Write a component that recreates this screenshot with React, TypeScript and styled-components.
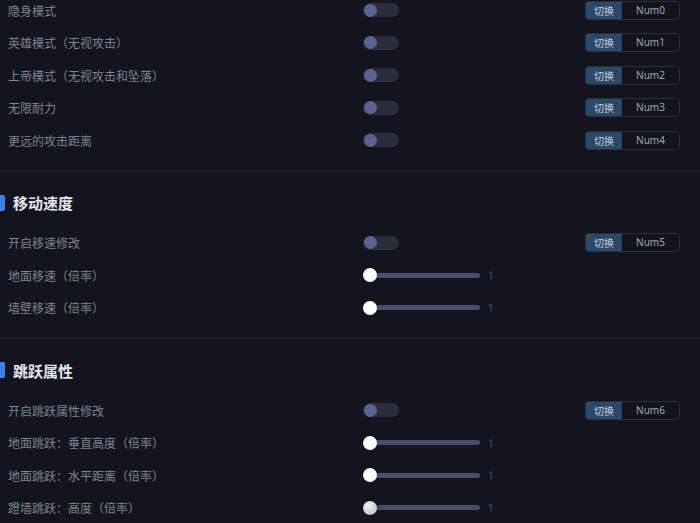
import React from 'react'
import styled, { createGlobalStyle } from 'styled-components'

const GlobalStyle = createGlobalStyle`
  html, body {
    margin: 0;
    padding: 0;
    background: #12151d;
    overflow: hidden;
  }
  body {
    font-family: "Noto Sans CJK SC", "Noto Sans", sans-serif;
  }
`

const StyledPage = styled.div`
  width: 700px;
  height: 523px;
  overflow: hidden;
  background: #12151d;
`
const StyledList = styled.div`
  margin-top: -6px;
`
const StyledRow = styled.div`
  display: grid;
  grid-template-columns: 355px 1fr auto;
  align-items: center;
  height: 32.5px;
  padding: 0 20px 0 8px;
`
const StyledLabel = styled.span`
  font-size: 12px;
  color: #7f848e;
  white-space: nowrap;
`
const StyledDivider = styled.div<{ below: number }>`
  height: 1px;
  background: #1f232d;
  margin: 14px 0 ${props => props.below}px;
`
const StyledHeader = styled.h2`
  display: flex;
  align-items: center;
  gap: 8px;
  height: 24px;
  margin: 0 0 12px;
  font-size: 15px;
  font-weight: 700;
  color: #e4e7ee;
  &::before {
    content: '';
    width: 5px;
    height: 16px;
    border-radius: 0 2px 2px 0;
    background: #3b7ff2;
  }
`
const StyledToggle = styled.div`
  display: flex;
  align-items: center;
  width: 36px;
  height: 14px;
  padding: 0 1px;
  box-sizing: border-box;
  border-radius: 7px;
  background: #2a2e3a;
  .knob {
    width: 13px;
    height: 13px;
    border-radius: 50%;
    background: #58638f;
  }
`
const StyledKey = styled.div`
  display: flex;
  width: 95px;
  height: 19px;
  box-sizing: border-box;
  border: 1px solid #2a2f3b;
  border-radius: 3px;
  overflow: hidden;
  font-size: 10px;
  line-height: 17px;
  .mode {
    width: 36px;
    text-align: center;
    background: #2c4868;
    color: #c5d2e0;
  }
  .key {
    flex: 1;
    text-align: center;
    font-family: "Noto Sans", sans-serif;
    color: #a2a9b5;
    background: #11141b;
  }
`
const StyledSlider = styled.div`
  display: flex;
  align-items: center;
  gap: 8px;
  .value {
    font-family: "Noto Sans", sans-serif;
    font-size: 10px;
    color: #3b5788;
  }
`
const StyledTrack = styled.div`
  position: relative;
  width: 110px;
  height: 5px;
  margin-left: 7px;
  border-radius: 3px;
  background: #4a4c69;
`
const StyledThumb = styled.div<{ dim: boolean }>`
  position: absolute;
  top: 50%;
  width: 14px;
  height: 14px;
  margin: -7px 0 0 -7px;
  border-radius: 50%;
  background: ${props => (props.dim ? 'radial-gradient(circle at 40% 35%, #f2f2f2, #b8b8b8)' : '#ffffff')};
  box-shadow: 0 0 2px rgba(0, 0, 0, 0.4);
`

type RowProps =
  | { kind: 'toggle'; label: string; hotkey: string }
  | { kind: 'slider'; label: string; value: number; dim?: boolean }

const Toggle: React.FC = () => (
  <StyledToggle>
    <div className="knob" />
  </StyledToggle>
)

const KeyBind: React.FC<{ hotkey: string }> = ({ hotkey }) => (
  <StyledKey>
    <span className="mode">切换</span>
    <span className="key">{hotkey}</span>
  </StyledKey>
)

const Slider: React.FC<{ value: number; min?: number; max?: number; dim?: boolean }> = ({
  value,
  min = 1,
  max = 10,
  dim = false,
}) => {
  const pct = ((value - min) / (max - min)) * 100
  return (
    <StyledSlider>
      <StyledTrack>
        <StyledThumb dim={dim} style={{ left: `${pct}%` }} />
      </StyledTrack>
      <span className="value">{value}</span>
    </StyledSlider>
  )
}

const SettingRow: React.FC<{ row: RowProps }> = ({ row }) => (
  <StyledRow>
    <StyledLabel>{row.label}</StyledLabel>
    {row.kind === 'toggle' ? <Toggle /> : <Slider value={row.value} dim={row.dim} />}
    {row.kind === 'toggle' ? <KeyBind hotkey={row.hotkey} /> : <span />}
  </StyledRow>
)

const modeRows: RowProps[] = [
  { kind: 'toggle', label: '隐身模式', hotkey: 'Num0' },
  { kind: 'toggle', label: '英雄模式（无视攻击）', hotkey: 'Num1' },
  { kind: 'toggle', label: '上帝模式（无视攻击和坠落）', hotkey: 'Num2' },
  { kind: 'toggle', label: '无限耐力', hotkey: 'Num3' },
  { kind: 'toggle', label: '更远的攻击距离', hotkey: 'Num4' },
]

const speedRows: RowProps[] = [
  { kind: 'toggle', label: '开启移速修改', hotkey: 'Num5' },
  { kind: 'slider', label: '地面移速（倍率）', value: 1 },
  { kind: 'slider', label: '墙壁移速（倍率）', value: 1 },
]

const jumpRows: RowProps[] = [
  { kind: 'toggle', label: '开启跳跃属性修改', hotkey: 'Num6' },
  { kind: 'slider', label: '地面跳跃：垂直高度（倍率）', value: 1 },
  { kind: 'slider', label: '地面跳跃：水平距离（倍率）', value: 1 },
  { kind: 'slider', label: '蹬墙跳跃：高度（倍率）', value: 1, dim: true },
]

export default function App() {
  return (
    <StyledPage>
      <GlobalStyle />
      <StyledList>
        {modeRows.map(row => (
          <SettingRow key={row.label} row={row} />
        ))}

        <StyledDivider below={19} />
        <StyledHeader>移动速度</StyledHeader>
        {speedRows.map(row => (
          <SettingRow key={row.label} row={row} />
        ))}

        <StyledDivider below={19} />
        <StyledHeader>跳跃属性</StyledHeader>
        {jumpRows.map(row => (
          <SettingRow key={row.label} row={row} />
        ))}
      </StyledList>
    </StyledPage>
  )
}
